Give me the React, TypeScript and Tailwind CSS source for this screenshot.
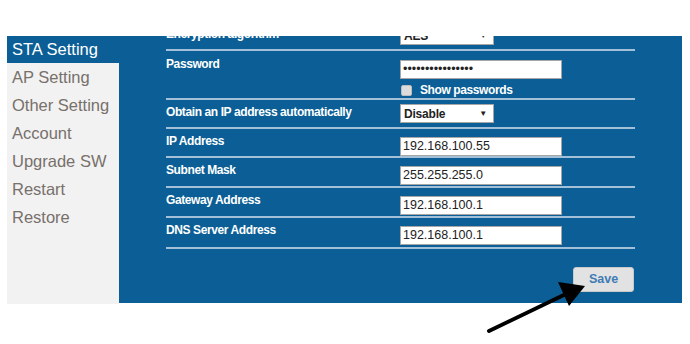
import React from "react";

const MENU = ["AP Setting", "Other Setting", "Account", "Upgrade SW", "Restart", "Restore"];

function TextBox({ value }: { value: string }) {
  return (
    <input
      readOnly
      value={value}
      className="h-[19px] w-[162px] border border-[#a6a6a6] bg-white px-[2px] text-[12.5px] leading-[17px] text-[#222] outline-none"
    />
  );
}

function Select({ value }: { value: string }) {
  return (
    <div className="flex h-[19px] w-[94px] items-center justify-between border border-[#a6a6a6] bg-white pl-[3px] pr-[6px] text-[12px] font-bold tracking-[-0.2px] text-[#222]">
      <span>{value}</span>
      <span className="text-[8px] leading-none">▼</span>
    </div>
  );
}

function Row({ label, h, pt, children }: { label: string; h: string; pt: string; children: React.ReactNode }) {
  return (
    <div className={`flex border-b-2 border-[#a4c0d8] ${h} ${pt}`}>
      <div className="w-[234px] text-[12px] font-bold leading-[17px] tracking-[-0.4px] text-white">{label}</div>
      <div>{children}</div>
    </div>
  );
}

export default function App() {
  return (
    <div className="relative h-[344px] w-[690px] overflow-hidden bg-white font-['Liberation_Sans',Arial,sans-serif]">
      <div className="flex pl-[7px] pt-[36px]">
        <aside className="h-[268px] w-[112px] bg-[#f2f2f2]">
          <div className="h-[27px] bg-[#0b5f96] pl-[5px] text-[16.5px] leading-[27px] text-white">STA Setting</div>
          {MENU.map((m) => (
            <div key={m} className="h-[28px] pl-[5px] text-[16.5px] leading-[28px] text-[#77706b]">
              {m}
            </div>
          ))}
        </aside>

        <main className="h-[267px] w-[563px] overflow-hidden bg-[#0b5f96]">
          <div className="ml-[47px] mt-[-15px] w-[469px]">
            <Row label="Encryption algorithm" h="h-[30px]" pt="pt-[5px]">
              <Select value="AES" />
            </Row>
            <Row label="Password" h="h-[49px]" pt="pt-[5px]">
              <TextBox value="••••••••••••••••" />
              <div className="mt-[3px] flex items-center gap-[8px] pl-[1px]">
                <span className="h-[11px] w-[11px] rounded-[2px] border border-[#bdbdbd] bg-[#dcdcdc]" />
                <span className="text-[12px] font-bold leading-[14px] tracking-[-0.4px] text-white">Show passwords</span>
              </div>
            </Row>
            <Row label="Obtain an IP address automatically" h="h-[29px]" pt="pt-[4px]">
              <Select value="Disable" />
            </Row>
            <Row label="IP Address" h="h-[29px]" pt="pt-[4px]">
              <TextBox value="192.168.100.55" />
            </Row>
            <Row label="Subnet Mask" h="h-[30px]" pt="pt-[4px]">
              <TextBox value="255.255.255.0" />
            </Row>
            <Row label="Gateway Address" h="h-[30px]" pt="pt-[4px]">
              <TextBox value="192.168.100.1" />
            </Row>
            <Row label="DNS Server Address" h="h-[31px]" pt="pt-[4px]">
              <TextBox value="192.168.100.1" />
            </Row>
            <div className="mt-[18px] flex justify-end pr-[1px]">
              <button className="h-[25px] w-[61px] rounded-[3px] border border-[#c9c9c9] bg-[#e2e2e2] text-[12.5px] font-bold text-[#3f7cb4]">
                Save
              </button>
            </div>
          </div>
        </main>
      </div>

      <svg className="pointer-events-none absolute left-0 top-0" width="690" height="344">
        <line x1="489" y1="331" x2="570" y2="292" stroke="#000" strokeWidth="4" strokeLinecap="round" />
        <polygon points="585,286 558,282 569,306" fill="#000" />
      </svg>
    </div>
  );
}
